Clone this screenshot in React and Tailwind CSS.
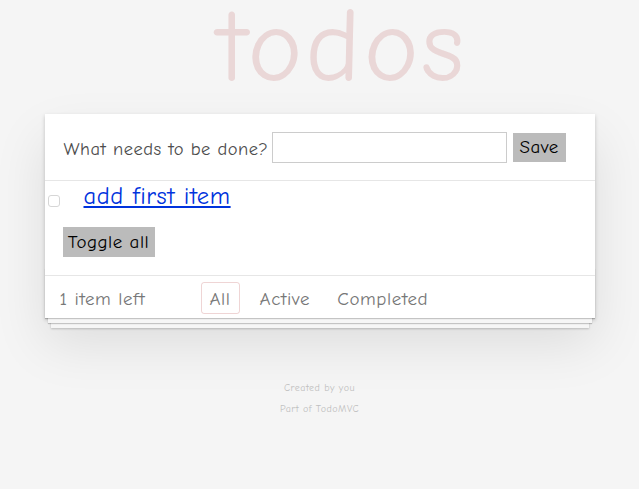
export default function App() {
  return (
    <div className="min-h-[489px] bg-[#f5f5f5] font-['Comic_Sans_MS','Comic_Neue',cursive] text-[#4d4d4d]">
      <div className="flex justify-center h-[114px]">
        <h1 className="text-[104px] leading-[92px] tracking-[3px] pl-[46px] text-[rgba(175,47,47,0.15)]">todos</h1>
      </div>
      <div className="mx-auto w-[550px] bg-white shadow-[0_2px_4px_0_rgba(0,0,0,0.2),0_25px_50px_0_rgba(0,0,0,0.1)]">
        <div className="flex items-center h-[67px] pl-[19px] border-b border-[#e6e6e6]">
          <label className="text-[18.5px] tracking-[0.5px] w-[208px] whitespace-nowrap pt-[5px]">What needs to be done?</label>
          <input className="w-[235px] h-[31px] border border-[#ccc] outline-none" />
          <button className="ml-[6px] h-[29px] px-[7px] bg-[#bbb] text-black text-[19px] tracking-[0.5px]">Save</button>
        </div>
        <div className="flex items-center">
          <input type="checkbox" className="appearance-none ml-[3px] w-[12px] h-[12px] mt-[9px] border border-[#d6d6d6] rounded-[3px] bg-white" />
          <a href="#" className="ml-[24px] text-[24.5px] leading-[31px] tracking-[0.6px] text-[#0033dd] underline">add first item</a>
        </div>
        <div className="pl-[18px] pt-[15px] pb-[18px]">
          <button className="h-[30px] w-[92px] bg-[#bbb] text-black text-[19px] tracking-[0.5px]">Toggle all</button>
        </div>
        <div className="relative flex items-center h-[43px] pt-[2px] px-[15px] border-t border-[#e6e6e6] text-[19px] tracking-[0.6px] text-[#777]">
          <div className="absolute left-0 right-0 bottom-0 h-[50px] shadow-[0_1px_1px_rgba(0,0,0,0.2),0_8px_0_-3px_#f6f6f6,0_9px_1px_-3px_rgba(0,0,0,0.2),0_16px_0_-6px_#f6f6f6,0_17px_2px_-6px_rgba(0,0,0,0.2)] pointer-events-none"></div>
          <span className="relative w-[141px] whitespace-nowrap pt-[3px]">1 item left</span>
          <a href="#" className="relative w-[39px] justify-center h-[32px] pt-[3px] flex items-center rounded-[3px] border border-[rgba(175,47,47,0.2)]">All</a>
          <a href="#" className="relative ml-[13px] px-[7px] h-[32px] pt-[3px] flex items-center">Active</a>
          <a href="#" className="relative ml-[13px] px-[7px] h-[32px] pt-[3px] flex items-center">Completed</a>
        </div>
      </div>
      <div className="mt-[65px] text-center text-[10px] tracking-[0.5px] text-[#bfbfbf] leading-none">
        <p>Created by you</p>
        <p className="mt-[11px]">Part of TodoMVC</p>
      </div>
    </div>
  );
}
